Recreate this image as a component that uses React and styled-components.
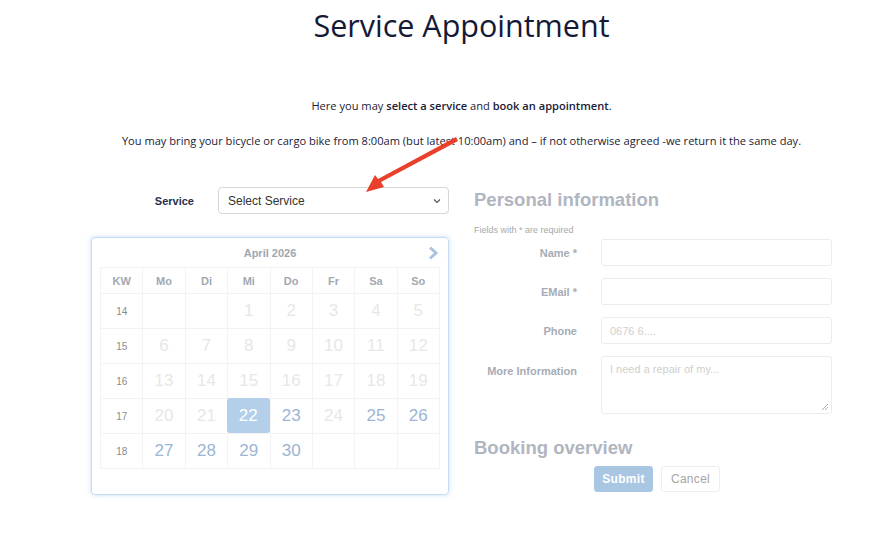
import React from "react";
import styled, { createGlobalStyle } from "styled-components";

const GlobalStyle = createGlobalStyle`
  body {
    margin: 0;
    background: #fff;
    font-family: "Liberation Sans", Arial, sans-serif;
  }
`;

const Page = styled.div`
  position: relative;
  width: 892px;
  height: 547px;
  box-sizing: border-box;
  padding-left: 31px;
  overflow: hidden;
`;

const Title = styled.h1`
  margin: 0;
  padding-top: 6px;
  text-align: center;
  font-family: "Open Sans", sans-serif;
  font-weight: 400;
  font-size: 30.5px;
  line-height: 38px;
  color: #141a36;
`;

const Intro = styled.p`
  margin: ${(p) => p.$top}px 0 0;
  text-align: center;
  font-family: "Open Sans", sans-serif;
  font-size: 11.1px;
  line-height: 16px;
  color: #1b2136;

  b {
    font-weight: 600;
  }
`;

const Main = styled.div`
  display: flex;
  justify-content: center;
  gap: 25px;
  margin-top: 38px;
`;

const Column = styled.div`
  width: 358px;
  display: flex;
  flex-direction: column;
`;

const FieldRow = styled.div`
  display: grid;
  grid-template-columns: 103px 231px;
  column-gap: 24px;
  align-items: ${(p) => (p.$top ? "start" : "center")};
  margin-bottom: ${(p) => p.$gap || 0}px;
`;

const Label = styled.label`
  text-align: right;
  font-size: 11px;
  font-weight: bold;
  color: ${(p) => (p.$dark ? "#27304a" : "#a7acb6")};
  padding-top: ${(p) => (p.$top ? 9 : 0)}px;
`;

const SelectBox = styled.div`
  height: 25px;
  border: 1px solid #d6d6d6;
  border-radius: 4px;
  display: flex;
  align-items: center;
  justify-content: space-between;
  padding: 0 7px 0 9px;
  font-size: 12px;
  color: #333;
`;

const Calendar = styled.div`
  margin-top: 23px;
  height: 256px;
  border: 1px solid #c7ddf3;
  border-radius: 4px;
  box-shadow: 0 0 5px rgba(150, 195, 240, 0.55);
  padding: 0 8px;
`;

const CalHeader = styled.div`
  display: grid;
  grid-template-columns: 1fr auto 1fr;
  align-items: center;
  height: 28px;
  padding-top: 1px;
`;

const Month = styled.div`
  grid-column: 2;
  font-size: 11px;
  font-weight: bold;
  color: #a0a6b0;
`;

const NextButton = styled.div`
  justify-self: end;
  margin-right: 2px;
  display: flex;
`;

const Grid = styled.div`
  display: grid;
  grid-template-columns: repeat(8, 1fr);
  border-top: 1px solid #f3f3f3;
  border-left: 1px solid #f3f3f3;
`;

const Cell = styled.div`
  height: ${(p) => (p.$head ? 26 : 35)}px;
  display: flex;
  align-items: center;
  justify-content: center;
  border-right: 1px solid #f3f3f3;
  border-bottom: 1px solid #f3f3f3;
  box-sizing: border-box;
  font-size: ${(p) => (p.$head ? 11 : p.$kw ? 10 : 17)}px;
  font-weight: ${(p) => (p.$head ? "bold" : "normal")};
  color: ${(p) =>
    p.$head ? "#a3a8b1" : p.$kw ? "#8b8b8b" : p.$on ? "#9bb5d3" : "#e7e7e7"};
`;

const Selected = styled.div`
  width: calc(100% + 1px);
  height: calc(100% + 1px);
  margin: -1px 0 0 -1px;
  display: flex;
  align-items: center;
  justify-content: center;
  background: #b3cfea;
  border-radius: 3px;
  color: #fff;
`;

const Heading = styled.h2`
  margin: ${(p) => p.$top}px 0 0;
  font-size: 18.5px;
  font-weight: bold;
  line-height: 26px;
  color: #b1b5bf;
`;

const Note = styled.div`
  margin: 12px 0 4px;
  font-size: 9px;
  color: #a9a9a9;
`;

const Input = styled.div`
  height: ${(p) => p.$h || 25}px;
  border: 1px solid #ececec;
  border-radius: 3px;
  padding: ${(p) => (p.$h ? "6px" : "0")} 8px 0;
  display: flex;
  align-items: ${(p) => (p.$h ? "flex-start" : "center")};
  font-size: 11px;
  color: #cfcfcf;
  position: relative;
`;

const Grip = styled.svg`
  position: absolute;
  right: 2px;
  bottom: 2px;
`;

const Buttons = styled.div`
  display: flex;
  justify-content: center;
  gap: 8px;
  margin-top: 5px;
  padding-left: 8px;
`;

const Button = styled.div`
  width: 59px;
  height: 26px;
  box-sizing: border-box;
  border-radius: 3px;
  display: flex;
  align-items: center;
  justify-content: center;
  font-size: 12px;
  letter-spacing: 0.3px;
  font-weight: ${(p) => (p.$primary ? "bold" : "normal")};
  background: ${(p) => (p.$primary ? "#a9c6e3" : "#fff")};
  color: ${(p) => (p.$primary ? "#fff" : "#a5a5a5")};
  border: 1px solid ${(p) => (p.$primary ? "#a9c6e3" : "#eeeeee")};
`;

const Arrow = styled.svg`
  position: absolute;
  left: 0;
  top: 0;
  pointer-events: none;
`;

const weeks = [
  [14, [null, null, 1, 2, 3, 4, 5]],
  [15, [6, 7, 8, 9, 10, 11, 12]],
  [16, [13, 14, 15, 16, 17, 18, 19]],
  [17, [20, 21, 22, 23, 24, 25, 26]],
  [18, [27, 28, 29, 30, null, null, null]],
];
const available = [23, 25, 26, 27, 28, 29, 30];

export default function App() {
  return (
    <Page>
      <GlobalStyle />
      <Title>Service Appointment</Title>
      <Intro $top={54}>
        Here you may <b>select a service</b> and <b>book an appointment</b>.
      </Intro>
      <Intro $top={19}>
        You may bring your bicycle or cargo bike from 8:00am (but latest
        10:00am) and – if not otherwise agreed -we return it the same day.
      </Intro>

      <Main>
        <Column>
          <FieldRow>
            <Label $dark>Service</Label>
            <SelectBox>
              Select Service
              <svg width="8" height="6" viewBox="0 0 8 6">
                <path d="M1 1.5 L4 4.5 L7 1.5" fill="none" stroke="#555" strokeWidth="1.2" />
              </svg>
            </SelectBox>
          </FieldRow>
          <Calendar>
            <CalHeader>
              <Month>April 2026</Month>
              <NextButton>
                <svg width="10" height="14" viewBox="0 0 10 14">
                  <path d="M2 1.5 L8 7 L2 12.5" fill="none" stroke="#a9c4e0" strokeWidth="3" />
                </svg>
              </NextButton>
            </CalHeader>
            <Grid>
              {["KW", "Mo", "Di", "Mi", "Do", "Fr", "Sa", "So"].map((d) => (
                <Cell key={d} $head>
                  {d}
                </Cell>
              ))}
              {weeks.map(([kw, days]) => (
                <React.Fragment key={kw}>
                  <Cell $kw>{kw}</Cell>
                  {days.map((d, i) => (
                    <Cell key={i} $on={available.includes(d)}>
                      {d === 22 ? <Selected>22</Selected> : d}
                    </Cell>
                  ))}
                </React.Fragment>
              ))}
            </Grid>
          </Calendar>
        </Column>

        <Column>
          <Heading $top={0}>Personal information</Heading>
          <Note>Fields with * are required</Note>
          <FieldRow $gap={12}>
            <Label>Name *</Label>
            <Input />
          </FieldRow>
          <FieldRow $gap={12}>
            <Label>EMail *</Label>
            <Input />
          </FieldRow>
          <FieldRow $gap={12}>
            <Label>Phone</Label>
            <Input>0676 6....</Input>
          </FieldRow>
          <FieldRow $top>
            <Label $top>More Information</Label>
            <Input $h={50}>
              I need a repair of my...
              <Grip width="9" height="9" viewBox="0 0 9 9">
                <path d="M8 2 L2 8 M8 5 L5 8" stroke="#999" strokeWidth="0.8" />
              </Grip>
            </Input>
          </FieldRow>
          <Heading $top={21}>Booking overview</Heading>
          <Buttons>
            <Button $primary>Submit</Button>
            <Button>Cancel</Button>
          </Buttons>
        </Column>
      </Main>

      <Arrow width="892" height="547" viewBox="0 0 892 547">
        <polygon
          points="456,137 458,141 381,182 384,187 366,192 375,175 378,179"
          fill="#e8402b"
        />
      </Arrow>
    </Page>
  );
}
